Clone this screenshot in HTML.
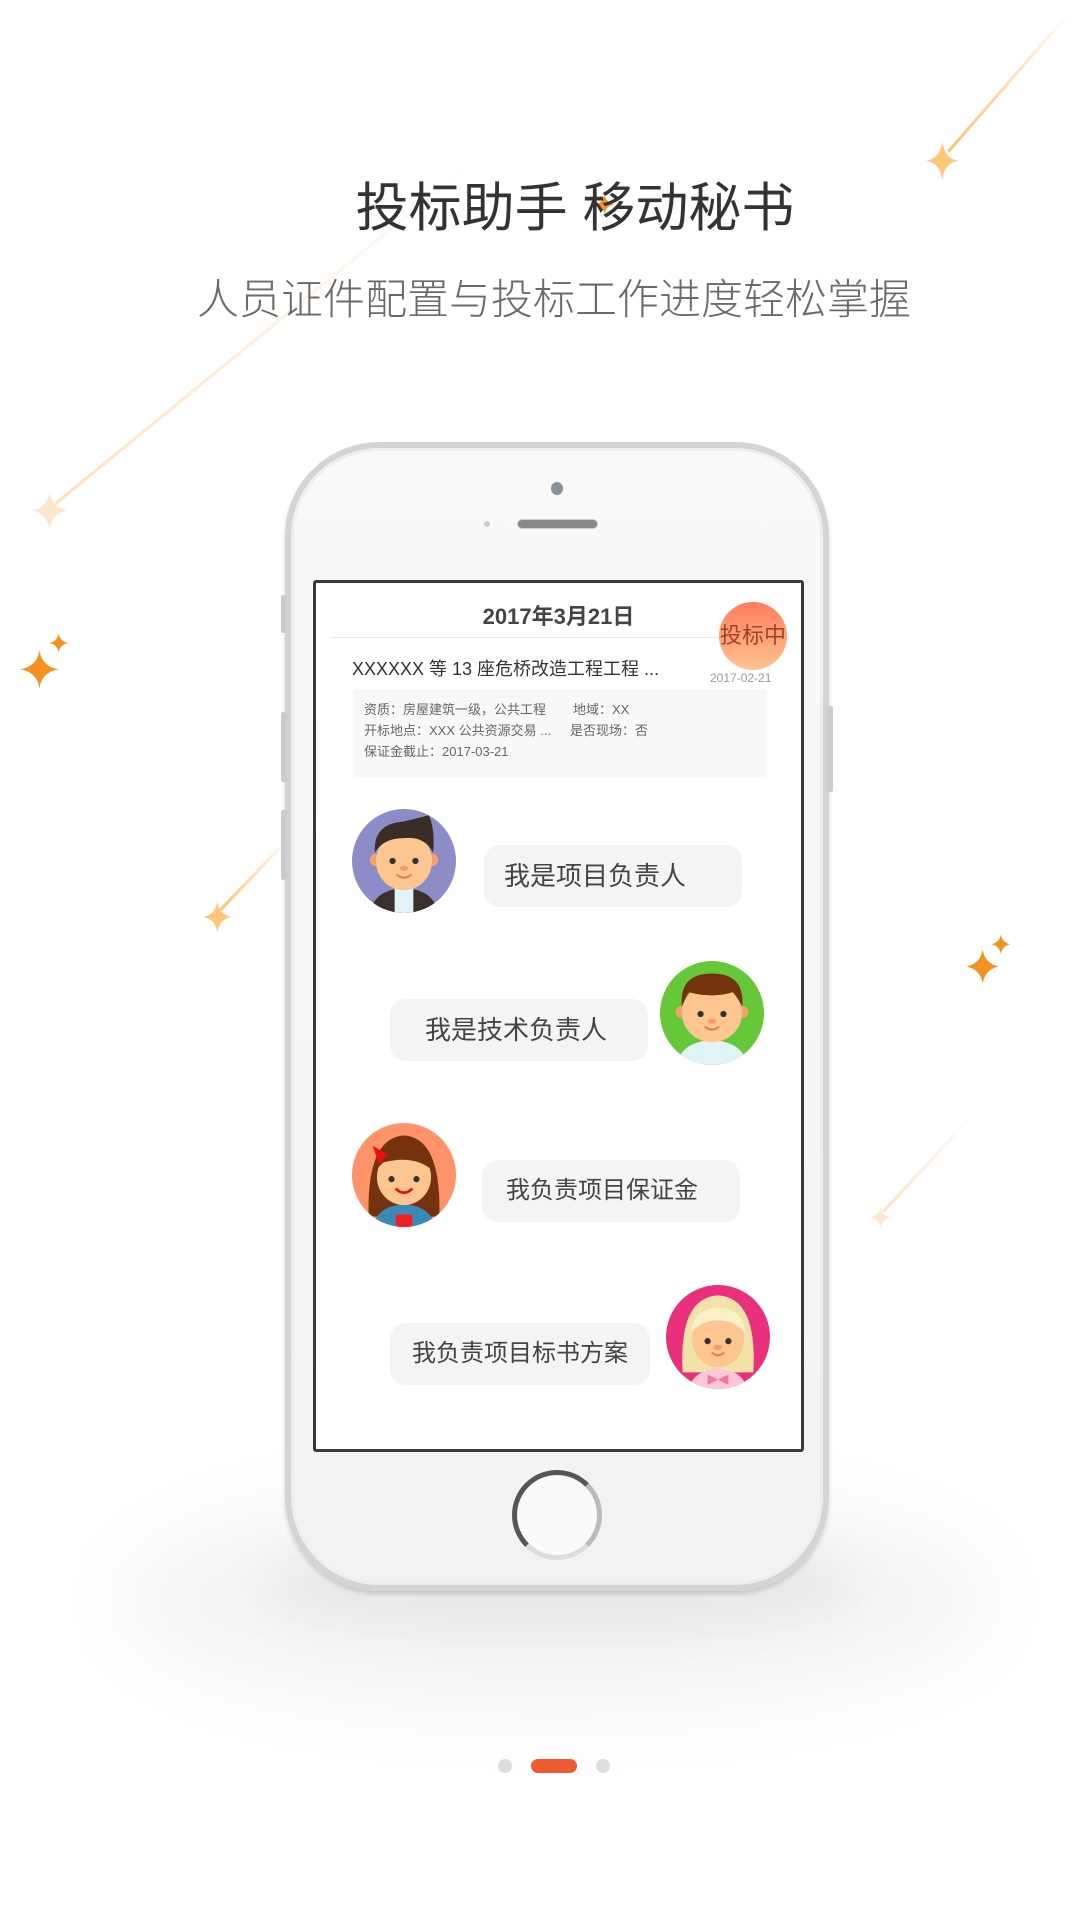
<!DOCTYPE html>
<html><head><meta charset="utf-8"><style>
*{margin:0;padding:0;box-sizing:border-box}
body{width:1080px;height:1920px;background:#fff;position:relative;overflow:hidden;font-family:"Liberation Sans","Noto Sans CJK SC",sans-serif}
.abs{position:absolute}
.t1{left:35px;width:1080px;top:166px;text-align:center;font-size:53px;color:#333}
.t2{left:14px;width:1080px;top:266px;text-align:center;font-size:42px;color:#6a6a6a;font-weight:300}
.phone{left:285px;top:442px;width:544px;height:1149px;border-radius:94px;background:linear-gradient(#f9f9f9,#f2f2f2);border:6px solid #d4d4d4;box-shadow:inset 0 0 0 3px #eee,0 3px 5px rgba(0,0,0,.15)}
.screen{left:313px;top:580px;width:491px;height:872px;border:3px solid #3a3a3a;border-radius:3px;background:#fff;overflow:hidden}
.bub{position:absolute;background:#f4f4f4;border-radius:16px;color:#444;font-size:26px;line-height:62px}
</style></head><body>
<div class="abs" style="left:120px;top:1490px;width:870px;height:220px;border-radius:50%;background:rgba(0,0,0,.045);filter:blur(40px)"></div>
<div class="abs" style="left:260px;top:1535px;width:600px;height:100px;border-radius:50%;background:rgba(0,0,0,.05);filter:blur(25px)"></div>
<svg class="abs" style="left:0;top:0" width="1080" height="1920">
<defs>
<linearGradient id="l1" x1="1" y1="0" x2="0" y2="1"><stop offset="0" stop-color="#ffbb66" stop-opacity="0"/><stop offset="1" stop-color="#ffc070"/></linearGradient>
<linearGradient id="l2" x1="1" y1="0" x2="0" y2="1"><stop offset="0" stop-color="#ffe0c0" stop-opacity="0"/><stop offset="1" stop-color="#ffe0c0"/></linearGradient>
</defs>
<g transform="scale(1.011)">
<line x1="1060" y1="10" x2="938" y2="150" stroke="url(#l1)" stroke-width="3"/>
<line x1="480" y1="150" x2="55" y2="498" stroke="url(#l2)" stroke-width="3"/>
<line x1="285" y1="830" x2="218" y2="900" stroke="url(#l1)" stroke-width="3"/>
<line x1="965" y1="1100" x2="874" y2="1198" stroke="url(#l2)" stroke-width="3"/>
<g fill="#ffc677"><path d="M932 140 Q934 157 948 159 Q934 161 932 178 Q930 161 916 159 Q930 157 932 140Z"/>
<path d="M215 892 Q217 905 229 907 Q217 909 215 922 Q213 909 201 907 Q213 905 215 892Z"/></g>
<g fill="#ffe6cc"><path d="M49 486 Q51 502 67 505 Q51 508 49 524 Q47 508 31 505 Q47 502 49 486Z"/>
<path d="M871 1193 Q872 1203 882 1204 Q872 1205 871 1215 Q870 1205 860 1204 Q870 1203 871 1193Z"/></g>
<g fill="#f6901e"><path d="M39 643 Q41 659 58 662 Q41 665 39 681 Q37 665 20 662 Q37 659 39 643Z"/>
<path d="M58 626 Q59 635 68 636 Q59 637 58 646 Q57 637 48 636 Q57 635 58 626Z"/>
<path d="M972 939 Q974 953 988 956 Q974 959 972 973 Q970 959 956 956 Q970 953 972 939Z"/>
<path d="M990 924 Q991 932 999 934 Q991 936 990 944 Q989 936 981 934 Q989 932 990 924Z"/>
<path d="M598 192 Q599 200 607 202 Q599 204 598 212 Q597 204 589 202 Q597 200 598 192Z"/></g>
</g>
</svg>
<div class="abs t1">投标助手 移动秘书</div>
<div class="abs t2">人员证件配置与投标工作进度轻松掌握</div>
<div class="abs phone"></div>
<div class="abs" style="left:281px;top:595px;width:6px;height:38px;background:#ccc;border-radius:2px"></div>
<div class="abs" style="left:281px;top:712px;width:6px;height:70px;background:#ccc;border-radius:2px"></div>
<div class="abs" style="left:281px;top:810px;width:6px;height:70px;background:#ccc;border-radius:2px"></div>
<div class="abs" style="left:827px;top:706px;width:6px;height:86px;background:#ccc;border-radius:2px"></div>
<div class="abs" style="left:551px;top:482px;width:12px;height:13px;border-radius:50%;background:#8a9098"></div>
<div class="abs" style="left:484px;top:521px;width:6px;height:6px;border-radius:50%;background:#ccc"></div>
<div class="abs" style="left:517px;top:519px;width:81px;height:10px;border-radius:5px;background:#888;border:1px solid #ccc"></div>
<div class="abs" style="left:512px;top:1470px;width:90px;height:90px;border-radius:50%;border:5px solid #555;border-bottom-color:#ddd;border-right-color:#bbb;background:#fafafa"></div>
<div class="abs screen">
 <div class="abs" style="left:0;width:485px;top:16px;text-align:center;font-size:22px;font-weight:bold;color:#444">2017年3月21日</div>
 <div class="abs" style="left:14px;width:445px;top:54px;height:1px;background:#e8e8e8"></div>
 <div class="abs" style="left:403px;top:19px;width:68px;height:68px;border-radius:50%;background:linear-gradient(#ff7c5c,#ffc38f);color:#a4412c;font-size:22px;line-height:68px;text-align:center">投标中</div>
 <div class="abs" style="left:36px;top:72px;font-size:18px;color:#333">XXXXXX 等 13 座危桥改造工程工程 ...</div>
 <div class="abs" style="left:394px;top:88px;font-size:12px;color:#999">2017-02-21</div>
 <div class="abs" style="left:37px;top:106px;width:414px;height:88px;background:#f8f8f8;font-size:13px;color:#666;line-height:21px;padding:10px 0 0 11px">
  <div>资质：房屋建筑一级，公共工程<span style="position:absolute;left:220px">地域：XX</span></div>
  <div>开标地点：XXX 公共资源交易 ...<span style="position:absolute;left:217px">是否现场：否</span></div>
  <div>保证金截止：2017-03-21</div>
 </div>
 <div class="bub" style="left:168px;top:262px;width:258px;padding-left:20px">我是项目负责人</div>
 <div class="bub" style="left:74px;top:416px;width:258px;padding-left:35px">我是技术负责人</div>
 <div class="bub" style="left:166px;top:577px;width:258px;padding-left:24px;font-size:24px">我负责项目保证金</div>
 <div class="bub" style="left:74px;top:740px;width:260px;padding-left:22px;font-size:24px">我负责项目标书方案</div>
 <svg class="abs" style="left:36px;top:226px" width="104" height="104" viewBox="0 0 100 100"><clipPath id="c1"><circle cx="50" cy="50" r="50"/></clipPath><g clip-path="url(#c1)"><rect width="100" height="100" fill="#8c8cc8"/><path d="M18 100 Q20 78 50 76 Q80 78 82 100Z" fill="#3c302c"/><rect x="41" y="76" width="18" height="24" fill="#e0f4f8"/><circle cx="23" cy="49" r="6" fill="#f4a070"/><circle cx="77" cy="49" r="6" fill="#f4a070"/><ellipse cx="50" cy="50" rx="27" ry="28" fill="#fdc590"/><path d="M22 42 Q20 14 50 12 Q66 8 74 6 Q80 20 78 42 Q70 26 50 28 Q30 28 22 42Z" fill="#3c2c26"/><circle cx="39" cy="50" r="3" fill="#333"/><circle cx="61" cy="50" r="3" fill="#333"/><ellipse cx="50" cy="57" rx="4" ry="2.5" fill="#f49a6a"/><path d="M43 63 Q50 69 57 63" stroke="#e08050" stroke-width="2" fill="none"/></g></svg>
 <svg class="abs" style="left:344px;top:378px" width="104" height="104" viewBox="0 0 100 100"><clipPath id="c2"><circle cx="50" cy="50" r="50"/></clipPath><g clip-path="url(#c2)"><rect width="100" height="100" fill="#66c838"/><path d="M16 100 Q20 78 50 76 Q80 78 84 100Z" fill="#e0f4f8"/><circle cx="21" cy="49" r="6" fill="#f4a070"/><circle cx="79" cy="49" r="6" fill="#f4a070"/><ellipse cx="50" cy="50" rx="29" ry="28" fill="#fdc590"/><path d="M21 44 Q18 12 50 12 Q82 12 79 44 Q74 34 70 30 Q50 36 28 30 Q24 36 21 44Z" fill="#74330e"/><circle cx="39" cy="51" r="3" fill="#333"/><circle cx="61" cy="51" r="3" fill="#333"/><ellipse cx="50" cy="58" rx="4" ry="2.5" fill="#f49a6a"/><path d="M43 63 Q50 69 57 63" stroke="#e08050" stroke-width="2" fill="none"/></g></svg>
 <svg class="abs" style="left:36px;top:540px" width="104" height="104" viewBox="0 0 100 100"><clipPath id="c3"><circle cx="50" cy="50" r="50"/></clipPath><g clip-path="url(#c3)"><rect width="100" height="100" fill="#ff9268"/><path d="M16 90 Q14 14 50 12 Q86 14 84 90Z" fill="#74330e"/><path d="M20 100 Q24 80 50 78 Q76 80 80 100Z" fill="#3a8ab8"/><rect x="42" y="88" width="16" height="12" fill="#f02020"/><ellipse cx="50" cy="52" rx="26" ry="27" fill="#fdc590"/><path d="M22 46 Q24 22 50 22 Q76 22 78 46 Q60 30 30 38Z" fill="#74330e"/><path d="M20 22 L34 30 L26 40Z M34 22 L22 34" fill="#e81010"/><circle cx="38" cy="54" r="3" fill="#333"/><circle cx="62" cy="54" r="3" fill="#333"/><path d="M42 63 Q50 71 58 63" stroke="#e81010" stroke-width="2.5" fill="none"/></g></svg>
 <svg class="abs" style="left:350px;top:702px" width="104" height="104" viewBox="0 0 100 100"><clipPath id="c4"><circle cx="50" cy="50" r="50"/></clipPath><g clip-path="url(#c4)"><rect width="100" height="100" fill="#e8307c"/><path d="M16 84 Q12 12 50 10 Q88 12 84 84Z" fill="#f3e2a8"/><path d="M22 100 Q26 82 50 80 Q74 82 78 100Z" fill="#fcc8d8"/><path d="M40 86 L50 91 L60 86 L60 96 L50 91 L40 96Z" fill="#f07898"/><ellipse cx="50" cy="52" rx="25" ry="27" fill="#fdc590"/><path d="M24 46 Q26 22 50 22 Q74 22 76 46 Q66 34 50 34 Q34 34 24 46Z" fill="#faf0c8"/><circle cx="40" cy="54" r="3" fill="#333"/><circle cx="60" cy="54" r="3" fill="#333"/><ellipse cx="50" cy="60" rx="4" ry="2.5" fill="#f49a6a"/><path d="M44 65 Q50 70 56 65" stroke="#e08050" stroke-width="2" fill="none"/></g></svg>
</div>
<div class="abs" style="left:498px;top:1759px;width:14px;height:14px;border-radius:50%;background:#ddd"></div>
<div class="abs" style="left:531px;top:1759px;width:46px;height:14px;border-radius:7px;background:#f05a30"></div>
<div class="abs" style="left:596px;top:1759px;width:14px;height:14px;border-radius:50%;background:#ddd"></div>
</body></html>
